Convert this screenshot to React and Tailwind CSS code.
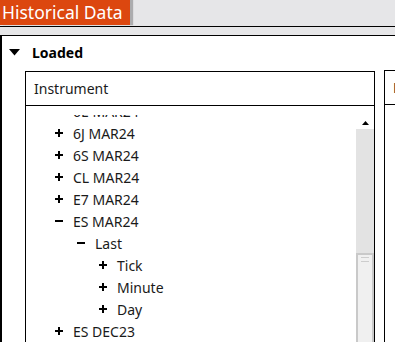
import React from "react";

const rows = [
  { label: "6E MAR24", level: 0, open: false },
  { label: "6J MAR24", level: 0, open: false },
  { label: "6S MAR24", level: 0, open: false },
  { label: "CL MAR24", level: 0, open: false },
  { label: "E7 MAR24", level: 0, open: false },
  { label: "ES MAR24", level: 0, open: true },
  { label: "Last", level: 1, open: true },
  { label: "Tick", level: 2, open: false },
  { label: "Minute", level: 2, open: false },
  { label: "Day", level: 2, open: false },
  { label: "ES DEC23", level: 0, open: false },
  { label: "ES SEP23", level: 0, open: false },
];

function Toggle({ open }) {
  return (
    <svg width="8" height="8" viewBox="0 0 8 8" className="shrink-0">
      <rect x="0" y="3" width="8" height="2" fill="#000" />
      {!open && <rect x="3" y="0" width="2" height="8" fill="#000" />}
    </svg>
  );
}

function TreeRow({ row }) {
  const indent = { 0: "pl-[29px]", 1: "pl-[51px]", 2: "pl-[73px]" }[row.level];
  return (
    <div className={`h-[22px] flex items-center gap-[10px] ${indent}`}>
      <Toggle open={row.open} />
      <span className="text-[14px] text-[#1a1a1a]">{row.label}</span>
    </div>
  );
}

export default function App() {
  return (
    <div className="w-[395px] h-[342px] overflow-hidden bg-white font-['Noto_Sans',sans-serif]">
      {/* title strip */}
      <div className="h-[26px] bg-[#e6e6e8] flex">
        <div className="h-[25px] bg-[#dc470f] text-white text-[17.5px] leading-[25px] pl-[2px] pr-[7px] shadow-[3px_0_1px_rgba(0,0,0,0.25)]">
          Historical Data
        </div>
      </div>
      <div className="h-[10px] bg-[#e6e6e8] border-y border-black" />

      <div className="border-l-2 border-black h-full">
        {/* Loaded section */}
        <div className="h-[35px] flex items-center gap-[12px] pl-[7px] pb-[3px]">
          <svg width="11" height="7" viewBox="0 0 11 7">
            <polygon points="0,0 11,0 5.5,6.5" fill="#000" />
          </svg>
          <span className="text-[14px] font-bold text-black">Loaded</span>
        </div>

        <div className="flex items-start">
          {/* Instrument panel */}
          <div className="ml-[23px] w-[350px] h-[300px] shrink-0 border border-black flex flex-col">
            <div className="h-[34px] border-b border-black flex items-center pl-2 text-[14px] text-[#1a1a1a]">
              Instrument
            </div>
            <div className="flex flex-1 pt-[9px]">
              <div className="flex-1 overflow-hidden">
                <div className="-mt-[15px]">
                  {rows.map((r) => (
                    <TreeRow key={r.label} row={r} />
                  ))}
                </div>
              </div>
              <div className="w-[18px] mt-[1px] bg-[#e3e3e3] flex flex-col">
                <div className="h-[13px] bg-white flex items-center justify-center">
                  <svg width="7" height="4" viewBox="0 0 7 4">
                    <polygon points="0,4 7,4 3.5,0" fill="#000" />
                  </svg>
                </div>
                <div className="h-[124px]" />
                <div className="flex-1 bg-[#f0f0f0] border-x-2 border-t-2 border-[#c9c9c9] pt-[2px] px-[3px] flex flex-col gap-[3px]">
                  <div className="h-px bg-[#cdcdcd]" />
                  <div className="h-px bg-[#cdcdcd]" />
                </div>
              </div>
            </div>
          </div>

          {/* second panel, clipped */}
          <div className="ml-[9px] -mt-[1px] w-[200px] h-[300px] border border-black shrink-0">
            <div className="h-[34px] border-b border-black flex items-center pl-2 text-[14px] text-[#1a1a1a]">
              Date
            </div>
          </div>
        </div>
      </div>
    </div>
  );
}
